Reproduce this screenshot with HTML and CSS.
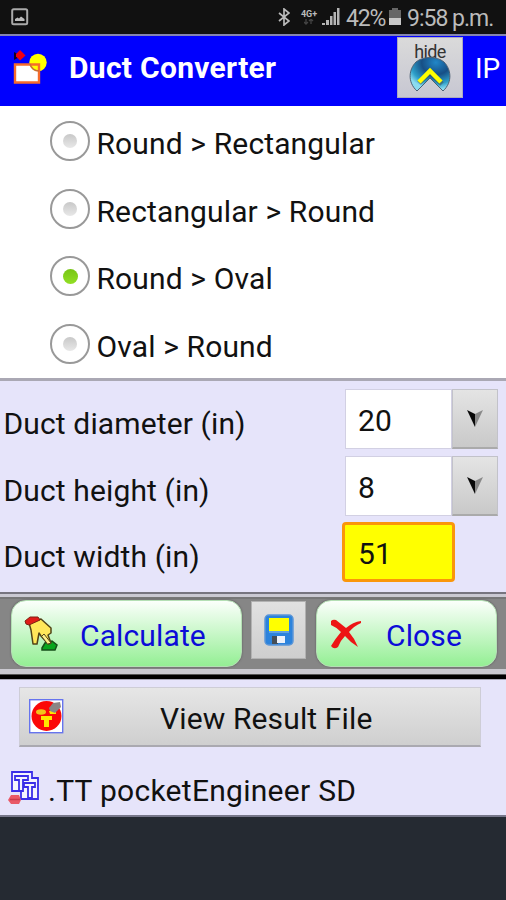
FILE: index.html
```html
<!DOCTYPE html>
<html lang="en">
<head>
<meta charset="utf-8">
<title>Duct Converter</title>
<link rel="stylesheet" href="styles.css">
</head>
<body>
<div class="status">
  <svg class="shot" width="18" height="18" viewBox="0 0 18 18"><rect x="1.2" y="1.2" width="15" height="15" rx="1.5" fill="#111" stroke="#aaa" stroke-width="2"/><path d="M4 13V11L6.500 9.500L8 10.500L10 8.500L13.500 11V13Z" fill="#bbb"/></svg>
  <svg class="bt" width="12" height="18" viewBox="0 0 12 18"><path d="M1 5L11 13L6 17V1L11 5L1 13" fill="none" stroke="#bbb" stroke-width="1.700"/></svg>
  <div class="net"><span>4G+</span><svg width="10" height="6" viewBox="0 0 10 6"><path d="M2 0V5M0 3L2 5L4 3M7 5V0M5 2L7 0L9 2" fill="none" stroke="#444" stroke-width="1.300"/></svg></div>
  <svg class="signal" width="18" height="18" viewBox="0 0 18 18"><path d="M0 15H3V17H0ZM4 12H7V17H4ZM8 8H10.500V17H8ZM11.500 4H14V17H11.500ZM15 0H17.500V17H15Z" fill="#b5b5b5"/></svg>
  <span class="pct">42%</span>
  <svg class="batt" width="12" height="18" viewBox="0 0 12 18"><path d="M3 0H9V2H12V10H0V2H3Z" fill="#666"/><path d="M0 10H12V17H0Z" fill="#c8c8c8"/></svg>
  <span class="clock">9:58 p.m.</span>
</div>
<header class="title">
  <svg class="logo" width="36" height="36" viewBox="0 0 36 36"><path d="M1 2L8 6L1 10Z" fill="#102"/><path d="M7 0L12.500 5.500L7 10.500L3 6.500V4Z" fill="#f00012"/><rect x="2" y="15" width="24" height="17.500" fill="#fff"/><circle cx="25" cy="12.500" r="8.700" fill="#ff0"/><path d="M2 14.500H26V32.500H2Z" fill="none" stroke="#f66b2b" stroke-width="2.400"/><path d="M17 14A9 9 0 0 0 26 21" fill="none" stroke="#c96d38" stroke-width="1.500"/></svg>
  <h1>Duct Converter</h1>
  <button class="hide"><span>hide</span><svg width="42" height="36" viewBox="0 0 42 36"><defs><radialGradient id="g" cx=".65" cy=".15" r=".8"><stop offset="0" stop-color="#2187c8"/><stop offset=".45" stop-color="#174f86"/><stop offset=".8" stop-color="#2d9fc9"/><stop offset="1" stop-color="#8bdcf0"/></radialGradient></defs><path d="M8 34C-2 25 0 12 7 5C14-1 28-1 35 5C42 12 44 25 34 34L21 21Z" fill="url(#g)" stroke="#4d6175"/><path d="M10 26L21 15L33 27" fill="none" stroke="#4b4c48" stroke-width="5" opacity=".5"/><path d="M10 25L21 14L32 25" fill="none" stroke="#ff0" stroke-width="4.500"/></svg></button>
  <span class="unit">IP</span>
</header>
<section class="modes">
  <label class="mode"><i class="radio"></i><span>Round &gt; Rectangular</span></label>
  <label class="mode"><i class="radio"></i><span>Rectangular &gt; Round</span></label>
  <label class="mode"><i class="radio on"></i><span>Round &gt; Oval</span></label>
  <label class="mode"><i class="radio"></i><span>Oval &gt; Round</span></label>
</section>
<section class="fields">
  <div class="row"><span class="label">Duct diameter (in)</span><div class="value">20</div><button class="drop"><svg width="16" height="17" viewBox="0 0 16 17"><path d="M0 0L8 4V17Z" fill="#080808"/><path d="M16 0L8 4V17Z" fill="#888"/></svg></button></div>
  <div class="row"><span class="label">Duct height (in)</span><div class="value">8</div><button class="drop"><svg width="16" height="17" viewBox="0 0 16 17"><path d="M0 0L8 4V17Z" fill="#080808"/><path d="M16 0L8 4V17Z" fill="#888"/></svg></button></div>
  <div class="row"><span class="label">Duct width (in)</span><div class="value result">51</div></div>
</section>
<section class="actions">
  <button class="pill calc"><svg width="36" height="36" viewBox="0 0 36 36"><path d="M18 32L21 27L28 25L33 29L31 34H18Z" fill="#08a51d" stroke="#154f18" stroke-width="1.500"/><path d="M5 7L17 3L27 12L27 17L24 19L27 27L24 28L17 20L15 17L13 28L9 28L7 14Z" fill="#ffe75a" stroke="#514318" stroke-width="1.500" stroke-linejoin="round"/><path d="M18 20L20 18L27 27L24 28" fill="#fff08a" stroke="#514318"/><path d="M1 5L6 1H14L16 4L5 9L2 8Z" fill="#df1c18" stroke="#7e2414"/></svg><span>Calculate</span></button>
  <button class="save"><svg width="30" height="32" viewBox="0 0 30 32"><rect x="1" y="1" width="28" height="30" rx="4" fill="#2c83dc" stroke="#5c96d7" stroke-width="1.500"/><rect x="5" y="4" width="20" height="13" fill="#ff0"/><path d="M5 18H25" stroke="#74aee4" stroke-width="1.500"/><rect x="8" y="22" width="6" height="8" fill="#454e57"/><rect x="13" y="22" width="8" height="7" fill="#eef2fa"/></svg></button>
  <button class="pill close"><svg width="32" height="30" viewBox="0 0 32 30"><path d="M1 2Q3 0 6 1L16 9Q23 3 31 2V4Q24 7 19 13Q25 20 28 28Q21 24 15 17Q10 22 8 28Q4 31 1 27Q5 20 11 13Q6 8 1 6Z" fill="#ed1515"/></svg><span>Close</span></button>
</section>
<section class="files">
  <button class="view"><svg width="35" height="35" viewBox="0 0 35 35"><rect x=".7" y=".7" width="33" height="33" fill="#fff" stroke="#6674ee" stroke-width="1.400"/><circle cx="17.500" cy="17" r="15" fill="#fb0808"/><ellipse cx="12" cy="13" rx="5" ry="2.800" fill="#f3c31a"/><path d="M20 12H27V15H21ZM12 17H23V21H20V28H15V21H12Z" fill="#ffe500"/><path d="M20 9L24 4L31 3L32 8L26 14L21 12Z" fill="#8b8585"/></svg><span>View Result File</span></button>
  <div class="path"><svg width="32" height="34" viewBox="0 0 32 34"><path d="M4 1H24V7H30V28H13V20H4ZM7 5H20V9H15V20H11V9H7ZM16 12H27V16H24V27H20V16H16Z" fill="#fff" fill-opacity=".6" stroke="#3a2ee8" stroke-width="1.800"/><path d="M3 24H11L13 29L11 33H3L0 29Z" fill="#e95967"/><path d="M2 28.500H12" stroke="#c83a4c" stroke-width="1.500"/></svg><span>.TT pocketEngineer SD</span></div>
</section>
</body>
</html>
```

FILE: styles.css
```css
* { box-sizing: border-box; }
body { margin: 0; width: 506px; height: 900px; overflow: hidden; background: #252a32; color: #111; font: 30px/36px Roboto, sans-serif; letter-spacing: .13px; }
button { margin: 0; padding: 0; font: inherit; letter-spacing: inherit; border: 0; }
svg { display: block; flex: none; }
span { white-space: nowrap; }
.status { height: 34px; background: #111; color: #bbb; display: flex; align-items: center; font-size: 23px; padding-left: 11px; letter-spacing: 0; }
.shot { margin-right: 249px; }
.bt { margin-right: 10px; }
.net { width: 18px; font-size: 9px; line-height: 9px; font-weight: bold; display: flex; flex-direction: column; align-items: center; margin-right: 4px; }
.signal { margin-right: 6px; }
.pct { width: 43px; letter-spacing: -1.2px; margin-top: 3px; }
.batt { margin-right: 6px; }
.clock { letter-spacing: -1px; margin-top: 3px; }
.title { height: 72px; border-top: 2px solid #8585b0; background: #0000fe; color: #fff; display: flex; align-items: flex-start; padding-left: 13px; }
.logo { margin: 14px 20px 0 0; }
h1 { margin: 14px 0 0; font-size: 30px; font-weight: bold; letter-spacing: .3px; width: 328px; white-space: nowrap; }
.hide { width: 66px; height: 61px; margin-top: 1px; background: linear-gradient(#dadada, #c7c7d2); border: 1px solid #aaa9c0; display: flex; flex-direction: column; align-items: center; font-size: 18px; line-height: 18px; padding-top: 5px; color: #333; }
.hide span { letter-spacing: -.6px; }
.hide svg { margin-top: -4px; }
.unit { font-size: 28px; margin: 15px 0 0 12px; letter-spacing: 0; }
.modes { height: 272px; background: #fff; padding: 2px 0 0 50px; }
.mode { height: 67.5px; display: flex; align-items: center; gap: 6.5px; }
.mode span { margin-top: 5px; }
.radio { flex: none; width: 40px; height: 40px; margin-top: -1px; border: 2px solid #999; border-radius: 50%; display: flex; align-items: center; justify-content: center; background: #fff; }
.radio::after { content: ""; width: 14px; height: 14px; border-radius: 50%; background: linear-gradient(#c8c8c8, #e8e8e8); }
.radio.on::after { width: 15px; height: 15px; background: linear-gradient(#77c516, #92df24); }
.fields { height: 214px; background: #e6e4fa; border-top: 3px solid #aaa8b4; padding: 8px 0 0 3.5px; }
.row { height: 66.5px; display: flex; align-items: flex-start; }
.label { width: 341.5px; margin-top: 17px; }
.value { width: 107px; height: 60px; background: #fff; border: 1px solid #d2d0e3; padding: 13px 0 0 12px; }
.drop { width: 46px; height: 60px; background: linear-gradient(#e4e4e4, #c9c9c9); border: 1px solid #c2c2c9; border-bottom: 2px solid #aaa; display: flex; justify-content: center; padding-top: 20px; }
.value.result { width: 113px; margin: 0 0 0 -3px; background: #ff0; border: 3px solid #fa960a; border-radius: 4px; padding: 11px 0 0 13px; }
.actions { height: 88px; background: linear-gradient(#77757f 0 2px, #cac9d2 2px 5px, #777 5px 7px, #868686 7px 77px, #cac9d0 77px 82px, #555 82px 83px, #000 83px 87px, #aaa9b8 87px); display: flex; align-items: flex-start; padding: 8px 0 0 11px; color: #0c0cd8; }
.pill { height: 67px; border-radius: 15px; background: linear-gradient(#fbfffb, #94ef94); border: 1px solid #b4dfb4; color: inherit; display: flex; align-items: center; box-shadow: 0 0 2px #555; }
.calc { width: 231px; padding-left: 12px; }
.calc span { margin: 4px 0 0 20px; }
.save { width: 55px; height: 58px; margin: 1px 10px 0 9px; background: linear-gradient(#e1e1e1, #cecece); border: 1px solid #b2b2b2; display: flex; align-items: center; justify-content: center; }
.close { width: 181px; padding-left: 13px; }
.close span { margin: 4px 0 0 24px; }
.files { height: 137px; background: #e6e4fa; padding: 7px 0 0 19px; border-bottom: 2px solid #77778a; }
.view { width: 462px; height: 60px; background: linear-gradient(#e6e6e6, #cfcfcf); border: 1px solid #cecdd6; border-bottom: 2px solid #aaa9b0; display: flex; align-items: center; padding-left: 9px; color: #111; }
.view span { margin: 4px 0 0 96px; }
.path { display: flex; align-items: flex-start; margin: 24px 0 0 -11px; }
.path span { margin: 2px 0 0 8px; letter-spacing: .28px; }
```
